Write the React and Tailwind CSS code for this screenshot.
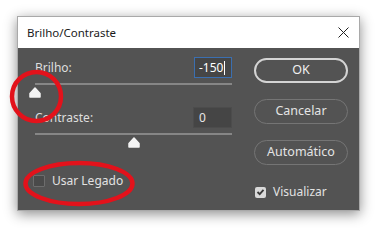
import React from 'react';

// Photoshop "Brilho/Contraste" dialog with two red annotation rings on top.
const SANS = "font-['Noto_Sans','Open_Sans','Liberation_Sans',sans-serif]";

const Thumb = ({ left }) => (
  <svg
    className="absolute top-[4px]"
    style={{ left: left - 6 }}
    width="12"
    height="11"
    viewBox="0 0 12 11"
  >
    <path d="M1 10 L1 6.5 L6 1 L11 6.5 L11 10 Z" fill="#f4f4f4" stroke="#f4f4f4" strokeWidth="1.5" strokeLinejoin="round" />
  </svg>
);

const Slider = ({ value }) => (
  <div className="relative h-[2px] w-[197px] bg-[#868686]">
    <Thumb left={value} />
  </div>
);

const Field = ({ label, value, active }) => (
  <div className="flex h-[21px] items-center justify-between">
    <span className="text-[12px] text-[#dedede]">{label}</span>
    <div
      className={
        active
          ? 'flex h-[21px] w-[38px] items-center border border-[#3b6fb0] bg-[#464646] pl-[4px] text-[12px] text-white'
          : 'flex h-[21px] w-[39px] items-center border border-[#4c4c4c] bg-[#454545] pl-[5px] text-[12px] text-[#e6e6e6]'
      }
    >
      {value}
      {active && <span className="ml-[1px] h-[14px] w-px bg-white" />}
    </div>
  </div>
);

const Button = ({ children, primary }) => (
  <button
    type="button"
    className={
      primary
        ? 'h-[25px] w-[94px] rounded-full border-2 border-[#d4d4d4] text-[12.5px] text-[#f0f0f0]'
        : 'h-[25px] w-[94px] rounded-full border border-[#757575] text-[12.5px] text-[#e4e4e4]'
    }
  >
    {children}
  </button>
);

const Check = ({ checked, label }) => (
  <div className="flex items-center gap-[7px]">
    {checked ? (
      <span className="flex h-[11px] w-[11px] items-center justify-center rounded-[2px] bg-[#d9d9d9]">
        <svg width="9" height="8" viewBox="0 0 9 8">
          <path d="M1.5 4 L3.7 6.2 L7.5 1.8" fill="none" stroke="#3a3a3a" strokeWidth="1.8" />
        </svg>
      </span>
    ) : (
      <span className="h-[12px] w-[12px] rounded-[1px] border border-[#6d6d6d] bg-[#4a4a4a]" />
    )}
    <span className="text-[12px] text-[#e2e2e2]">{label}</span>
  </div>
);

export default function App() {
  return (
    <div className={`relative h-[228px] w-[377px] overflow-hidden bg-white pl-[17px] pt-[16px] ${SANS}`}>
      <div className="flex h-[195px] w-[343px] flex-col border border-[#a9a9a9] shadow-[0_3px_12px_rgba(0,0,0,0.45)]">
        <div className="flex h-[31px] items-center justify-between bg-white pl-[9px] pr-[10px]">
          <span className="text-[11.5px] text-[#1a1a1a]">Brilho/Contraste</span>
          <svg width="11" height="11" viewBox="0 0 11 11">
            <path d="M0.5 0.5 L10.5 10.5 M10.5 0.5 L0.5 10.5" stroke="#222" strokeWidth="1" />
          </svg>
        </div>

        <div className="flex flex-1 bg-[#535353]">
          <div className="w-[214px] pl-[17px] pt-[9px]">
            <Field label="Brilho:" value="-150" active />
            <div className="mt-[5px]">
              <Slider value={0} />
            </div>
            <div className="mt-[22px]">
              <Field label="Contraste:" value="0" />
            </div>
            <div className="mt-[5px]">
              <Slider value={99} />
            </div>
            <div className="-ml-[2px] mt-[37px]">
              <Check label="Usar Legado" />
            </div>
          </div>

          <div className="flex flex-col gap-[16px] pl-[22px] pt-[10px]">
            <Button primary>OK</Button>
            <Button>Cancelar</Button>
            <Button>Automático</Button>
            <div className="ml-[1px] mt-[2px]">
              <Check checked label="Visualizar" />
            </div>
          </div>
        </div>
      </div>

      {/* red annotation rings */}
      <svg className="pointer-events-none absolute left-0 top-0" width="377" height="228">
        <circle cx="36.5" cy="96.5" r="24.5" fill="none" stroke="#e3121b" strokeWidth="4.5" />
        <ellipse cx="79" cy="183.5" rx="53.5" ry="20.5" fill="none" stroke="#e3121b" strokeWidth="4.5" />
      </svg>
    </div>
  );
}
